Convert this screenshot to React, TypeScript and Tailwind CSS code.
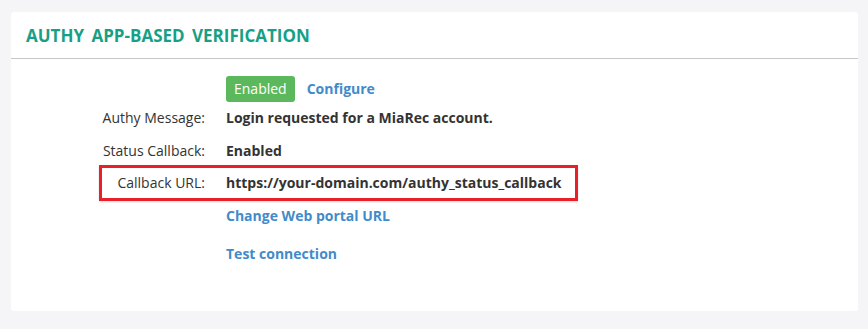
import React from "react";

const font = { fontFamily: '"Open Sans", "Liberation Sans", sans-serif' };

function Label({ children }: { children: React.ReactNode }) {
  return <div className="w-[179px] shrink-0 text-right text-[14px] text-[#333]">{children}</div>;
}

export default function App() {
  return (
    <div className="min-h-[329px] w-[868px] bg-[#f5f5f7] pt-[12px] pl-[11px] pr-[10px] pb-[18px]" style={font}>
      <div className="rounded-[3px] bg-white h-[299px]">
        {/* Header */}
        <div className="h-[47px] border-b border-[#c6c6c6] pl-[15px] flex items-center">
          <h2 className="text-[17px] font-bold uppercase text-[#17a085] [word-spacing:3px] leading-none pt-[1px]">
            Authy App-based Verification
          </h2>
        </div>

        {/* Body */}
        <div className="pl-[15px] pt-[17px] text-[14px] leading-[20px] text-[#333]">
          <div className="flex items-center h-[26px]">
            <div className="w-[179px] shrink-0" />
            <div className="ml-[21px] flex items-center gap-[12px]">
              <span className="rounded-[3px] bg-[#5cb85c] px-[8px] h-[26px] leading-[26px] text-white">Enabled</span>
              <a className="font-bold text-[#428bca]">Configure</a>
            </div>
          </div>

          <div className="flex mt-[6px]">
            <Label>Authy Message:</Label>
            <div className="ml-[21px] font-bold">Login requested for a MiaRec account.</div>
          </div>

          <div className="flex mt-[13px]">
            <Label>Status Callback:</Label>
            <div className="ml-[21px] font-bold">Enabled</div>
          </div>

          <div className="relative flex mt-[12px]">
            <Label>Callback URL:</Label>
            <div className="ml-[21px] font-bold">https://your-domain.com/authy_status_callback</div>
            <div className="absolute left-[73px] top-[-8px] w-[479px] h-[36px] border-[3px] border-[#e8202a] shadow-[0_1px_2px_rgba(0,0,0,0.15)]" />
          </div>

          <div className="flex mt-[13px]">
            <div className="w-[179px] shrink-0" />
            <a className="ml-[21px] font-bold text-[#428bca]">Change Web portal URL</a>
          </div>

          <div className="flex mt-[18px]">
            <div className="w-[179px] shrink-0" />
            <a className="ml-[21px] font-bold text-[#428bca]">Test connection</a>
          </div>
        </div>
      </div>
    </div>
  );
}
